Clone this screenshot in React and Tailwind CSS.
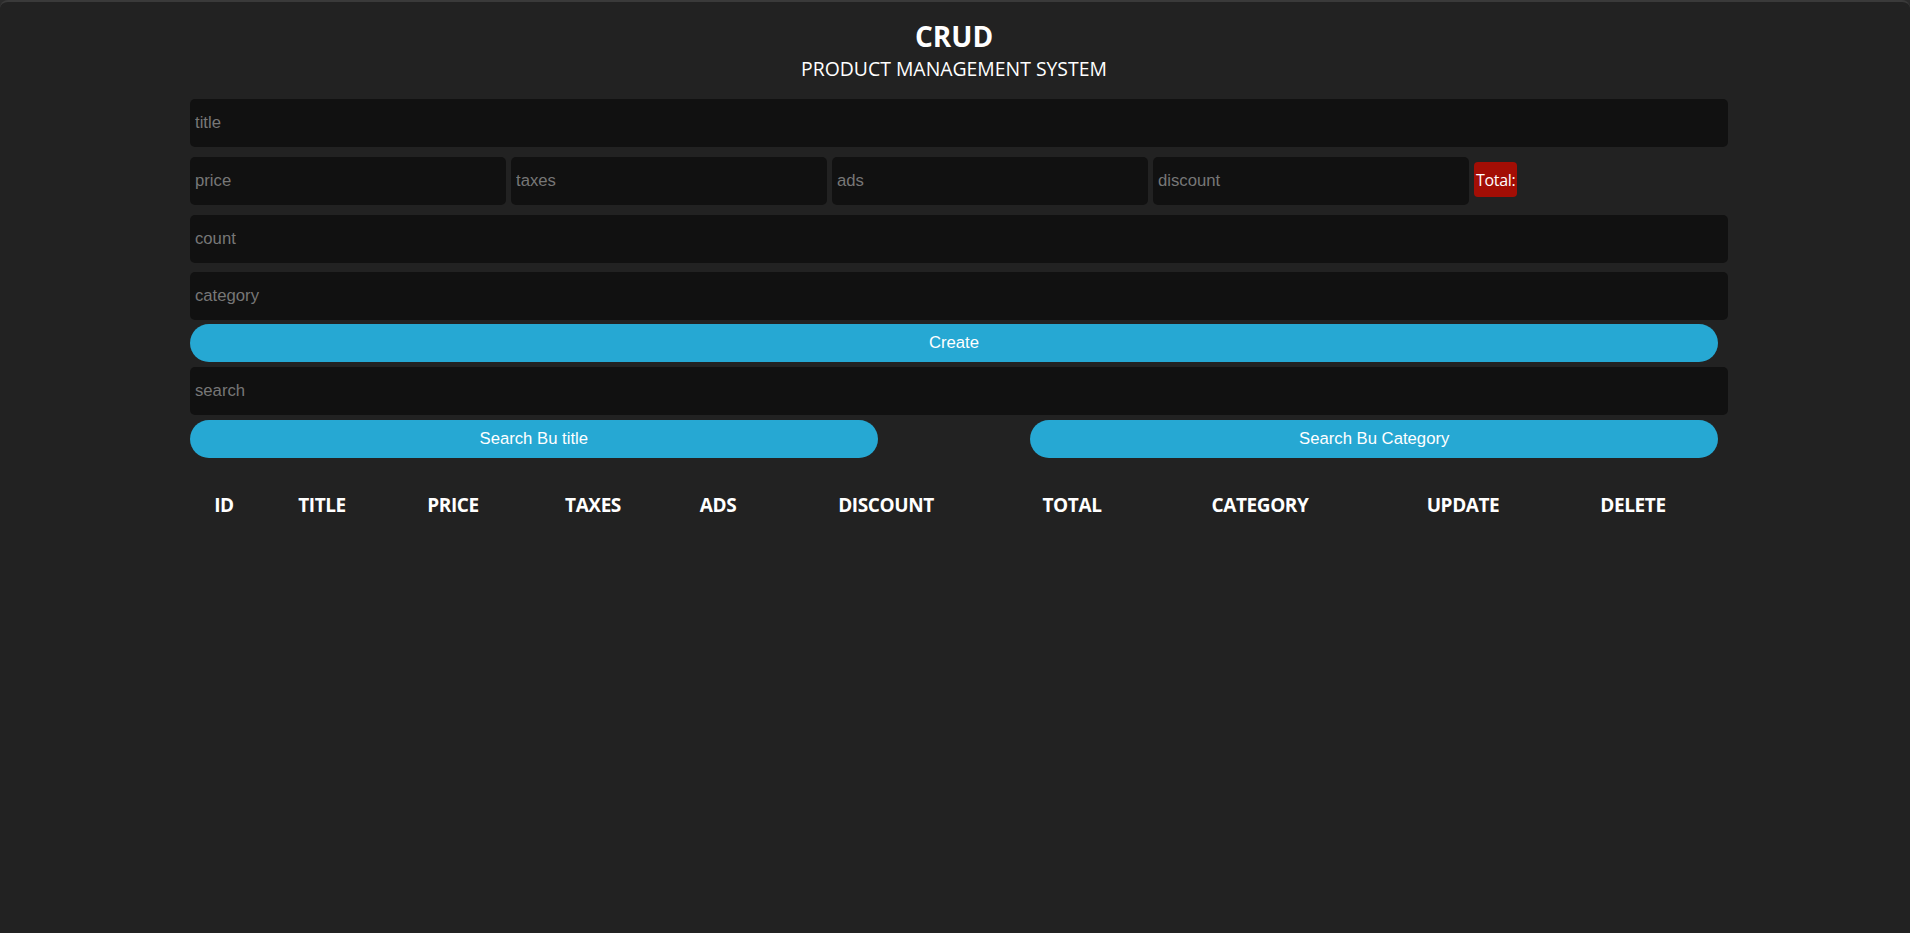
import { useState } from "react";

const columns = [
  { label: "ID", width: "w-[68px]" },
  { label: "TITLE", width: "w-[128px]" },
  { label: "PRICE", width: "w-[134px]" },
  { label: "TAXES", width: "w-[146px]" },
  { label: "ADS", width: "w-[104px]" },
  { label: "DISCOUNT", width: "w-[232px]" },
  { label: "TOTAL", width: "w-[140px]" },
  { label: "CATEGORY", width: "w-[236px]" },
  { label: "UPDATE", width: "w-[170px]" },
  { label: "DELETE", width: "w-[170px]" },
];

const inputClass =
  "h-[48px] rounded-[5px] bg-[#111111] px-[5px] text-[16.7px] text-white placeholder-[#777777] outline-none";

export default function App() {
  const [form, setForm] = useState({ title: "", price: "", taxes: "", ads: "", discount: "", count: "", category: "", search: "" });

  const update = (field) => (event) => setForm((current) => ({ ...current, [field]: event.target.value }));

  const total = form.price ? Number(form.price || 0) + Number(form.taxes || 0) + Number(form.ads || 0) - Number(form.discount || 0) : "";

  return (
    <div className="min-h-screen bg-[#2b2b2b] font-['Liberation_Sans',Arial,sans-serif]">
      <div className="min-h-screen rounded-tl-[8px] rounded-tr-[8px] border-t-2 border-[#3a3a3a] bg-[#222222]">
        <div className="ml-[190px] w-[1528px]">
          <div className="pt-[16px] text-center font-['Open_Sans',sans-serif] text-white">
            <h1 className="text-[28px] font-bold leading-[36px]">CRUD</h1>
            <p className="mt-[2px] text-[19.4px] leading-[26px]">PRODUCT MANAGEMENT SYSTEM</p>
          </div>

          <div className="mt-[17px] flex flex-col">
            <input value={form.title} onChange={update("title")} placeholder="title" className={`${inputClass} w-[1538px]`} />

            <div className="mt-[10px] flex items-center gap-[5px]">
              <input value={form.price} onChange={update("price")} placeholder="price" className={`${inputClass} h-[47px] w-[316px]`} />
              <input value={form.taxes} onChange={update("taxes")} placeholder="taxes" className={`${inputClass} h-[47px] w-[316px]`} />
              <input value={form.ads} onChange={update("ads")} placeholder="ads" className={`${inputClass} h-[47px] w-[316px]`} />
              <input value={form.discount} onChange={update("discount")} placeholder="discount" className={`${inputClass} h-[47px] w-[316px]`} />
              <span className="mt-[-3px] flex h-[35px] items-center rounded-[4px] bg-[#a30e05] px-[2px] font-['Open_Sans',sans-serif] text-[16px] tracking-[-0.3px] text-white">
                Total:{total}
              </span>
            </div>

            <input value={form.count} onChange={update("count")} placeholder="count" className={`${inputClass} mt-[10px] w-[1538px]`} />
            <input value={form.category} onChange={update("category")} placeholder="category" className={`${inputClass} mt-[9px] w-[1538px]`} />

            <button className="mt-[4px] h-[38px] w-full rounded-[19px] bg-[#26a8d3] text-[16.7px] text-white">Create</button>

            <input value={form.search} onChange={update("search")} placeholder="search" className={`${inputClass} mt-[5px] h-[47px] w-[1538px]`} />

            <div className="mt-[5px] flex justify-between">
              <button className="h-[38px] w-[45%] rounded-[19px] bg-[#26a8d3] text-[16.7px] text-white">Search Bu title</button>
              <button className="h-[38px] w-[45%] rounded-[19px] bg-[#26a8d3] text-[16.7px] text-white">Search Bu Category</button>
            </div>
          </div>

          <table className="mt-[32px] w-[1528px] table-fixed text-center font-['Open_Sans',sans-serif] text-white">
            <thead>
              <tr>
                {columns.map((column) => (
                  <th key={column.label} className={`${column.width} p-0 text-[19px] font-bold leading-[30px] tracking-[-0.4px]`}>
                    {column.label}
                  </th>
                ))}
              </tr>
            </thead>
            <tbody></tbody>
          </table>
        </div>
      </div>
    </div>
  );
}
